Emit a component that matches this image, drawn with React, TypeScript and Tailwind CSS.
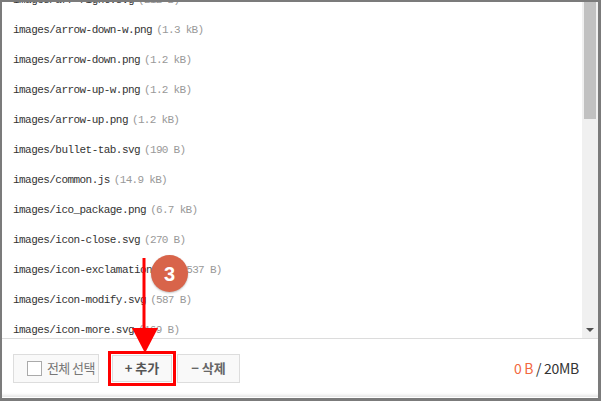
// 파일 업로드 목록 + 하단 버튼 바 (튜토리얼 스크린샷 3단계)

const files: [string, string][] = [
  ["images/arr-right.svg", "(212 B)"],
  ["images/arrow-down-w.png", "(1.3 kB)"],
  ["images/arrow-down.png", "(1.2 kB)"],
  ["images/arrow-up-w.png", "(1.2 kB)"],
  ["images/arrow-up.png", "(1.2 kB)"],
  ["images/bullet-tab.svg", "(190 B)"],
  ["images/common.js", "(14.9 kB)"],
  ["images/ico_package.png", "(6.7 kB)"],
  ["images/icon-close.svg", "(270 B)"],
  ["images/icon-exclamation.svg", "(537 B)"],
  ["images/icon-modify.svg", "(587 B)"],
  ["images/icon-more.svg", "(169 B)"],
];

const mono = { fontFamily: '"Liberation Mono", "DejaVu Sans Mono", monospace' };
const kr = { fontFamily: '"Noto Sans CJK KR", "Noto Sans", sans-serif' };

export default function App() {
  return (
    <div className="relative flex h-[401px] w-[601px] flex-col overflow-hidden border-t-2 border-r-[3px] border-b-[3px] border-l-2 border-[#7b7b7b] bg-white">
      {/* 파일 목록 */}
      <div className="flex h-[337px] border-b border-[#dcdcdc]">
        <div className="flex-1 overflow-hidden">
          <div className="-mt-[17px]">
            {files.map(([name, size]) => (
              <div key={name} className="flex h-[30px] items-center whitespace-nowrap pl-[11px]" style={mono}>
                <span className="text-[11px] tracking-[-0.55px] text-[#333]">{name}</span>
                <span className="ml-[4px] text-[11px] tracking-[-0.7px] text-[#999]">{size}</span>
              </div>
            ))}
          </div>
        </div>
        {/* 스크롤바 */}
        <div className="flex w-[16px] flex-col bg-[#f0f0f0]">
          <div className="mx-[2px] h-[117px] bg-[#c1c1c1]" />
          <div className="flex-1" />
          <div className="flex h-[17px] items-center justify-center">
            <div className="h-0 w-0 border-x-[4px] border-t-[4px] border-x-transparent border-t-[#505050]" />
          </div>
        </div>
      </div>

      {/* 하단 버튼 바 */}
      <div className="flex h-[58px] items-center px-[11px] shadow-[inset_0_-4px_3px_-2px_#e6e6e6]" style={kr}>
        <button className="flex h-[29px] w-[86px] items-center gap-[5px] whitespace-nowrap border border-[#dddddd] bg-[#f9f9f9] pl-[13px] text-[13px] tracking-[-0.6px] text-[#777]">
          <span className="h-[15px] w-[15px] shrink-0 border border-[#aaaaaa] bg-white" />
          <span>전체 선택</span>
        </button>
        <div className="ml-[9px] border-[3px] border-[#ff0000] p-[1px]">
          <button className="flex h-[27px] w-[60px] items-center justify-center whitespace-nowrap border border-[#dddddd] bg-[#f9f9f9] text-[13px] font-bold text-[#555]">
            + 추가
          </button>
        </div>
        <button className="ml-[1px] flex h-[29px] w-[63px] items-center justify-center whitespace-nowrap border border-[#dddddd] bg-[#f9f9f9] text-[13px] font-bold text-[#666]">
          − 삭제
        </button>
        <div className="ml-auto mr-[8px] whitespace-nowrap text-[14px] tracking-[-0.3px]">
          <span className="text-[#f2683f]">0 B</span>
          <span className="text-[#333]"> / 20MB</span>
        </div>
      </div>

      {/* 안내 주석: 빨간 화살표 + 번호 배지 */}
      <svg className="pointer-events-none absolute left-[128px] top-[254px]" width="32" height="100" viewBox="0 0 32 100">
        <rect x="12.5" y="2" width="3" height="76" fill="#ff0000" />
        <polygon points="2,72 28,72 15,97" fill="#ff0000" />
      </svg>
      <div className="pointer-events-none absolute left-[149px] top-[253px] flex h-[37px] w-[37px] items-center justify-center rounded-full bg-[#d8644a] text-[20px] font-bold text-white shadow-[0_1px_2px_rgba(0,0,0,0.25)]" style={{ fontFamily: '"Liberation Sans", Arial, sans-serif' }}>
        3
      </div>
    </div>
  );
}
